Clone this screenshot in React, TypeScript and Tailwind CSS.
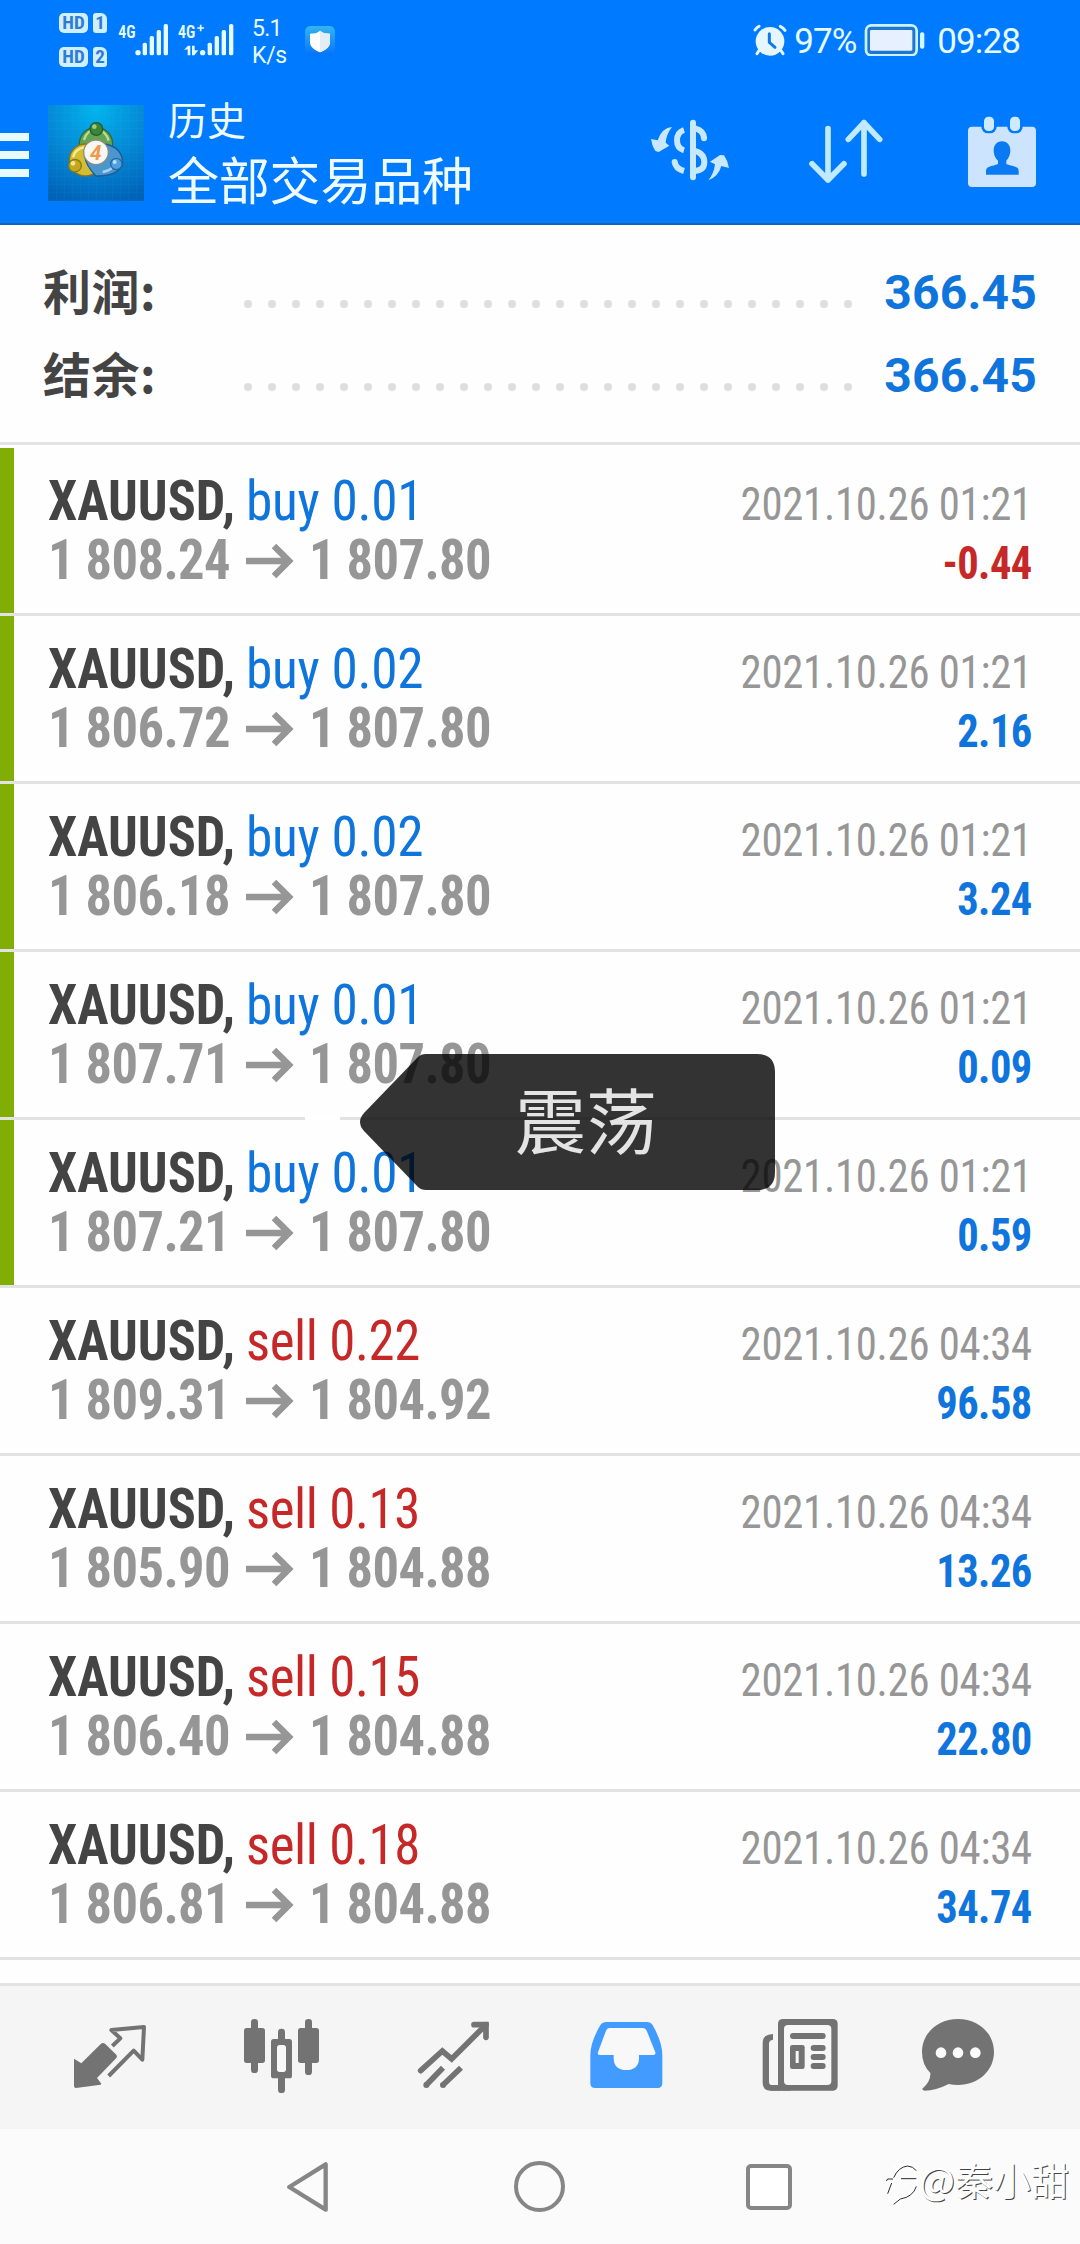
type Deal = {
  side: "buy" | "sell";
  volume: string;
  open: string;
  close: string;
  time: string;
  profit: string;
  marked?: boolean;
};

const deals: Deal[] = [
  { side: "buy", volume: "0.01", open: "1 808.24", close: "1 807.80", time: "2021.10.26 01:21", profit: "-0.44", marked: true },
  { side: "buy", volume: "0.02", open: "1 806.72", close: "1 807.80", time: "2021.10.26 01:21", profit: "2.16", marked: true },
  { side: "buy", volume: "0.02", open: "1 806.18", close: "1 807.80", time: "2021.10.26 01:21", profit: "3.24", marked: true },
  { side: "buy", volume: "0.01", open: "1 807.71", close: "1 807.80", time: "2021.10.26 01:21", profit: "0.09", marked: true },
  { side: "buy", volume: "0.01", open: "1 807.21", close: "1 807.80", time: "2021.10.26 01:21", profit: "0.59", marked: true },
  { side: "sell", volume: "0.22", open: "1 809.31", close: "1 804.92", time: "2021.10.26 04:34", profit: "96.58" },
  { side: "sell", volume: "0.13", open: "1 805.90", close: "1 804.88", time: "2021.10.26 04:34", profit: "13.26" },
  { side: "sell", volume: "0.15", open: "1 806.40", close: "1 804.88", time: "2021.10.26 04:34", profit: "22.80" },
  { side: "sell", volume: "0.18", open: "1 806.81", close: "1 804.88", time: "2021.10.26 04:34", profit: "34.74" },
];

const summary = [
  { label: "利润:", value: "366.45" },
  { label: "结余:", value: "366.45" },
];

function SimBadge({ slot }: { slot: string }) {
  return (
    <div className="flex h-5 gap-[5px] font-['Roboto_Condensed'] text-[19px] leading-5 font-bold text-[#2f7cd6]">
      <span className="w-[29px] rounded-[5px] bg-[#cff1ff] text-center">HD</span>
      <span className="w-3.5 rounded-[3px] rounded-tr-[6px] bg-[#cff1ff] text-center">{slot}</span>
    </div>
  );
}

function StatusBar() {
  return (
    <div className="flex h-20 items-start text-[#e6fbff]">
      <div className="mt-[13px] ml-[59px] flex flex-col gap-3.5">
        <SimBadge slot="1" />
        <SimBadge slot="2" />
      </div>
      <svg className="mt-5 ml-[11px] h-10 w-[52px]" viewBox="234 60 156 120" fill="currentColor">
        <text x="235" y="114" fontSize="54" fontWeight="600" textLength="52" lengthAdjust="spacingAndGlyphs" fontFamily="Roboto Condensed">4G</text>
        <circle cx="294" cy="158" r="8" />
        <rect x="308" y="128" width="13" height="38" rx="5" />
        <rect x="329" y="108" width="13" height="58" rx="5" />
        <rect x="350" y="90" width="13" height="76" rx="5" />
        <rect x="371" y="72" width="13" height="94" rx="5" />
      </svg>
      <svg className="mt-5 ml-2 h-10 w-[57px]" viewBox="414 60 171 120" fill="currentColor">
        <text x="414" y="114" fontSize="54" fontWeight="600" textLength="52" lengthAdjust="spacingAndGlyphs" fontFamily="Roboto Condensed">4G</text>
        <path d="M472 84h20M482 74v20" stroke="currentColor" strokeWidth="5" />
        <path d="M432 150l12-13h7v29h-8v-18zM456 137h8v14h11l-12 15h-7z" />
        <circle cx="488" cy="158" r="8" />
        <rect x="503" y="128" width="13" height="38" rx="5" />
        <rect x="524" y="108" width="13" height="58" rx="5" />
        <rect x="545" y="90" width="13" height="76" rx="5" />
        <rect x="567" y="72" width="13" height="94" rx="5" />
      </svg>
      <div className="mt-[15px] ml-[17px] w-[35px] font-['Roboto'] text-[23px] leading-[27px]">
        <p className="tracking-[-0.8px]">5.1</p>
        <p className="tracking-[-0.3px]">K/s</p>
      </div>
      <svg className="mt-[26px] ml-[18px] h-[30px] w-[30px]" viewBox="0 0 90 90">
        <defs>
          <linearGradient id="guard" x1="0" y1="0" x2="0" y2="1">
            <stop offset="0" stopColor="#35b4f0" />
            <stop offset="1" stopColor="#0573fb" />
          </linearGradient>
        </defs>
        <rect width="90" height="88" rx="16" fill="url(#guard)" />
        <path d="M45 14c8 7 18 9 30 9v26c0 14-14 24-30 30-16-6-30-16-30-30V23c12 0 22-2 30-9z" fill="#fff" />
        <path d="M45 14c8 7 18 9 30 9v26c0 14-14 24-30 30z" fill="#e3edf6" />
      </svg>
      <svg className="mt-6 ml-auto h-8 w-[34px]" viewBox="336 72 102 96" fill="none" stroke="#e6f6ff" strokeLinecap="round">
        <circle cx="387" cy="124" r="43" fill="#e6f6ff" stroke="none" />
        <path d="M342 90q6-9 12-11M418 79q9 4 14 12M354 152l-6 9M420 152l6 9" strokeWidth="9" />
        <path d="M385 101v26l17 15" stroke="#1178e6" strokeWidth="9" />
      </svg>
      <span className="mt-[22px] ml-[7px] w-[70px] font-['Roboto'] text-[35px] leading-10 tracking-[-0.9px]">97%</span>
      <svg className="mt-6 h-8 w-[62px]" viewBox="672 72 186 96">
        <rect x="678" y="76" width="152" height="90" rx="16" fill="#1d76d2" stroke="#c9f3ff" strokeWidth="8" />
        <rect x="690" y="90" width="127" height="62" rx="4" fill="#e6f0ff" />
        <rect x="840" y="97" width="13" height="49" rx="6" fill="#d5f5ff" />
      </svg>
      <span className="mt-[22px] mr-[60px] ml-[11px] font-['Roboto'] text-[35px] leading-10 tracking-[-0.9px]">09:28</span>
    </div>
  );
}

function AppLogo() {
  return (
    <svg className="mt-[25px] ml-[19px] h-24 w-24 shrink-0" viewBox="24 315 288 288">
      <defs>
        <radialGradient id="logoBg" cx="0.5" cy="0.05" r="1">
          <stop offset="0" stopColor="#00b4ee" />
          <stop offset="0.5" stopColor="#0589d6" />
          <stop offset="1" stopColor="#0062b8" />
        </radialGradient>
        <pattern id="logoGrid" width="24" height="24" patternUnits="userSpaceOnUse">
          <path d="M24 0H0v24" fill="none" stroke="#3cb5ea" strokeOpacity="0.2" strokeWidth="2" />
        </pattern>
      </defs>
      <rect x="24" y="315" width="288" height="288" fill="url(#logoBg)" />
      <rect x="24" y="315" width="288" height="288" fill="url(#logoGrid)" />
      <g strokeWidth="4">
        <circle cx="168" cy="432" r="50" fill="#63a452" stroke="#2f6b33" />
        <circle cx="136" cy="480" r="48" fill="#d3bd35" stroke="#85751c" />
        <path d="M168 528q-30-30-34-60l60-36q56 10 54 62-18 36-80 34z" fill="#4a97cf" stroke="#1d5b94" />
        <path d="M132 420q8-30 36-32 30 4 38 34" fill="none" stroke="#b9dc9a" strokeWidth="7" />
        <path d="M99 472q6-26 34-30" fill="none" stroke="#f6ee8e" strokeWidth="7" />
        <path d="M188 516q38-6 44-42" fill="none" stroke="#a3d5f3" strokeWidth="7" />
        <circle cx="169" cy="387" r="19" fill="#3c8438" stroke="#275c28" />
        <circle cx="105" cy="497" r="19" fill="#c3a81e" stroke="#8c7717" />
        <circle cx="229" cy="492" r="17" fill="#4fa0dc" stroke="#2568a4" />
        <circle cx="163" cy="380" r="7" fill="#9bcb86" stroke="none" />
        <circle cx="99" cy="490" r="7" fill="#f6ea90" stroke="none" />
        <circle cx="224" cy="486" r="6" fill="#b7e0fa" stroke="none" />
        <circle cx="168" cy="457" r="37" fill="#f7f7f4" stroke="#8f8d7c" />
      </g>
      <text x="167" y="479" textAnchor="middle" fontSize="62" fontWeight="700" fontStyle="italic" fontFamily="Roboto" fill="#f09a4e">4</text>
    </svg>
  );
}

function Header() {
  return (
    <header className="h-[225px] border-b-2 border-[#1464b8] bg-[#007aff]">
      <StatusBar />
      <div className="flex items-start">
        <div className="mt-[53px] flex w-[29px] flex-col gap-2.5">
          <span className="h-2 bg-[#e8fbff]" />
          <span className="h-2 bg-[#e8fbff]" />
          <span className="h-2 bg-[#e8fbff]" />
        </div>
        <AppLogo />
        <div className="mt-[19px] ml-6 font-['Noto_Sans_CJK_SC',sans-serif] text-[#effcff]">
          <p className="text-[39px] leading-[39px]">历史</p>
          <h1 className="mt-[15px] text-[51px] leading-[51px] tracking-[-0.2px]">全部交易品种</h1>
        </div>
        <svg className="mt-[37px] ml-auto h-[68px] w-20" viewBox="30 354 240 204" fill="none" stroke="#c8e8ff" strokeWidth="18">
          <path d="M159 371v164" strokeLinecap="round" />
          <path d="M132 393q-21 7-21 31t21 30M165 388q26 6 27 30" />
          <circle cx="192" cy="418" r="9" fill="#c8e8ff" stroke="none" />
          <circle cx="104" cy="489" r="9" fill="#c8e8ff" stroke="none" />
          <path d="M104 489q3 20 28 27M162 455q31 8 31 34t-31 27" />
          <g fill="#c8e8ff" stroke="none">
            <path d="M96 384q-30 2-43 40l-20-4q3 21 13 36l10 3 32-19-11-9q2-25 19-47z" />
            <path d="M205 544q30-11 39-43l23 6q-3-21-15-38l-12-1-30 20 15 8q-3 27-20 48z" />
          </g>
        </svg>
        <svg className="mt-[37px] ml-[76px] h-[68px] w-[80px]" viewBox="498 354 240 204" fill="none" stroke="#bfeaff" strokeWidth="17" strokeLinecap="round" strokeLinejoin="round">
          <path d="M564 389v154M516 494l48 49 48-49" />
          <path d="M672 525V371M625 421l47-50 47 50" />
        </svg>
        <svg className="mt-[34px] mr-[42px] ml-20 h-[76px] w-[72px]" viewBox="978 342 216 228">
          <rect x="984" y="380" width="204" height="181" rx="12" fill="#cde4ff" />
          <rect x="1024" y="342" width="46" height="58" rx="20" fill="#007aff" />
          <rect x="1102" y="342" width="46" height="58" rx="20" fill="#007aff" />
          <rect x="1032" y="350" width="30" height="43" rx="13" fill="#cdeaff" />
          <rect x="1110" y="350" width="30" height="43" rx="13" fill="#cdeaff" />
          <path d="M1086 424c16 0 25 12 25 27 0 14-6 26-12 31v10c10 4 27 7 33 11 5 4 4 12 4 21h-98c0-9-1-17 4-21 6-4 22-7 32-11v-10c-7-5-13-17-13-31 0-15 9-27 25-27z" fill="#0a7af2" />
        </svg>
      </div>
    </header>
  );
}

function Summary() {
  return (
    <section className="h-[220px] border-b-3 border-[#e3e3e3] pt-[23px] pr-[43px] pl-[43px]">
      {summary.map(({ label, value }) => (
        <div key={label} className="flex h-[83px] items-center">
          <span className="w-[201px] font-['Noto_Sans_CJK_SC',sans-serif] text-[48px] leading-[83px] font-bold tracking-[0.5px] text-[#444]">{label}</span>
          <span className="flex gap-4 pt-[29px]">
            {Array.from({ length: 26 }, (_, i) => (
              <i key={i} className="h-2 w-2 rounded-full bg-[#dedede]" />
            ))}
          </span>
          <span className="ml-auto pt-1.5 font-['Roboto'] text-[48px] leading-none font-bold tracking-[0.2px] text-[#0f75dc]">{value}</span>
        </div>
      ))}
    </section>
  );
}

function DealRow({ deal, gap }: { deal: Deal; gap: boolean }) {
  return (
    <li className="relative flex h-[168px] border-b-3 border-[#e3e3e3] font-['Roboto_Condensed'] whitespace-nowrap">
      <span className={deal.marked ? "w-3.5 bg-[#80ae04]" : "w-3.5"} />
      <div className="pt-6 pl-[34px] text-[55px] leading-[59px]">
        <p className="flex">
          <span className="w-[198px] origin-left scale-x-[0.95] font-bold text-[#444]">XAUUSD,</span>
          <span className={deal.side === "buy" ? "origin-left scale-x-[0.97] tracking-[-0.3px] text-[#0f75dc]" : "origin-left scale-x-[0.96] tracking-[-0.4px] text-[#c62828]"}>
            {deal.side} {deal.volume}
          </span>
        </p>
        <p className="flex items-center font-bold tracking-[-0.6px] text-[#969696]">
          <span className="w-[198px] origin-left scale-x-[0.955]">{deal.open}</span>
          <svg className="mr-[15px] h-9 w-12" viewBox="0 0 48 36" fill="none" stroke="currentColor" strokeWidth="6.5">
            <path d="M0 18h43M28 3l15 15-15 15" />
          </svg>
          <span className="origin-left scale-x-[0.955]">{deal.close}</span>
        </p>
      </div>
      <div className="mr-12 ml-auto pt-[27px] text-right text-[45.5px] leading-[59px]">
        <p className="origin-right scale-x-[0.94] tracking-[-0.3px] text-[#969696]">{deal.time}</p>
        <p className={deal.profit.startsWith("-") ? "origin-right scale-x-[0.935] font-bold tracking-[-0.6px] text-[#c62828]" : "origin-right scale-x-[0.935] font-bold tracking-[-0.6px] text-[#0f75dc]"}>
          {deal.profit}
        </p>
      </div>
      {gap && <span className="absolute -bottom-[3px] left-[305px] h-[3px] w-[35px] bg-white" />}
    </li>
  );
}

function Bubble() {
  return (
    <div className="absolute top-[1054px] left-[360px] h-[136px] w-[415px]">
      <svg className="absolute inset-0 h-full w-full" viewBox="0 0 415 136" fill="#000" fillOpacity="0.8">
        <path d="M66 0h331q18 0 18 18v100q0 18-18 18H66q-5 0-8-3L4 77q-8-9 0-18L58 3q3-3 8-3z" />
      </svg>
      <span className="relative block pt-[23px] pl-[155px] font-['Noto_Sans_CJK_SC',sans-serif] text-[71px] leading-[80px] text-[#e4e4e4]">震荡</span>
    </div>
  );
}

function TabBar() {
  return (
    <nav className="flex h-[146px] items-start border-t-3 border-[#e3e3e3] bg-[#f5f5f5] pt-8 text-[#737373]">
      <svg className="ml-[74px] h-[76px] w-[73px]" viewBox="72 54 219 228">
        <path d="M72 176l22 14 59-59q6-4 12 0l34 33q4 5 0 10l-58 60 13 17-2 3-74 10q-6 0-6-6z" fill="currentColor" />
        <path d="M187 138l24-23-27-25 98-9-5 98-26-27-75 76" fill="none" stroke="currentColor" strokeWidth="12" strokeLinejoin="round" />
      </svg>
      <svg className="ml-24 h-[76px] w-[77px]" viewBox="579 54 231 228" fill="currentColor">
        <rect x="603" y="57" width="21" height="162" rx="10" />
        <rect x="582" y="84" width="63" height="105" rx="8" />
        <rect x="765" y="57" width="21" height="168" rx="10" />
        <rect x="744" y="84" width="63" height="105" rx="8" />
        <rect x="684" y="86" width="21" height="193" rx="10" />
        <rect x="663" y="117" width="63" height="118" rx="8" />
        <rect x="681" y="135" width="27" height="81" rx="8" fill="#f8f8f8" />
      </svg>
      <svg className="ml-[97px] h-[76px] w-[73px]" viewBox="1101 54 219 228" fill="none" stroke="currentColor" strokeWidth="17">
        <path d="M1112 212l65-59 28 24 103-103" strokeLinecap="round" />
        <path d="M1272 74h36v38" strokeLinecap="round" />
        <path d="M1128 256l51-53M1178 256l55-53" />
        <circle cx="1129" cy="255" r="9" fill="currentColor" stroke="none" />
        <circle cx="1179" cy="255" r="9" fill="currentColor" stroke="none" />
      </svg>
      <svg className="ml-[99px] h-[76px] w-[75px]" viewBox="57 54 225 228">
        <path d="M110 66h120q12 0 18 10 29 50 29 90v84q0 14-14 14H75q-14 0-14-14v-84q0-40 30-90 6-10 19-10z" fill="#429bff" />
        <path d="M118 84h101q8 0 11 8l26 65q2 8-6 8h-43v8q0 37-38 37t-38-37v-8H90q-9 0-6-8l24-65q3-8 10-8z" fill="#f8f8f8" />
      </svg>
      <svg className="ml-[98px] h-[76px] w-[77px]" viewBox="576 54 231 228" fill="currentColor">
        <path d="M609 102v17q-12 1-12 12v114q0 10 10 10h18l8 17h-31q-24 0-24-24V128q0-25 31-26z" />
        <rect x="624" y="57" width="179" height="215" rx="14" />
        <rect x="602" y="255" width="60" height="17" />
        <rect x="642" y="75" width="142" height="180" rx="12" fill="#f7f7f7" />
        <rect x="660" y="99" width="107" height="18" rx="9" />
        <rect x="660" y="135" width="44" height="72" rx="7" />
        <rect x="677" y="153" width="9" height="36" fill="#f7f7f7" />
        <rect x="722" y="135" width="45" height="18" rx="9" />
        <rect x="722" y="162" width="45" height="18" rx="9" />
        <rect x="722" y="189" width="45" height="18" rx="9" />
      </svg>
      <svg className="ml-[82px] h-[76px] w-[74px]" viewBox="1053 54 222 228" fill="currentColor">
        <path d="M1164 57c60 0 108 42 108 99s-48 99-108 99q-15 0-28-3-39 20-72 20-8-1-7-6 26-23 24-47-25-25-25-63c0-57 48-99 108-99z" />
        <g fill="#fbfbfb">
          <circle cx="1113" cy="158" r="16" />
          <circle cx="1164" cy="158" r="16" />
          <circle cx="1216" cy="158" r="16" />
        </g>
      </svg>
    </nav>
  );
}

function SystemNav() {
  return (
    <div className="flex h-[115px] items-center bg-[#fbfbfb]">
      <svg className="ml-[287px] h-[52px] w-11" viewBox="711 483 132 156" fill="none" stroke="#868686" strokeWidth="13" strokeLinejoin="round">
        <path d="M827 493v136L718 561z" />
      </svg>
      <span className="ml-[183px] h-[51px] w-[51px] rounded-full border-[4.5px] border-[#868686]" />
      <span className="ml-[181px] h-[46px] w-[46px] rounded-[5px] border-[4.5px] border-[#868686] bg-white" />
      <div className="ml-[91px] flex items-center pb-1">
        <svg className="h-12 w-9" viewBox="936 490 108 144" fill="none" stroke="#2a2a2a" strokeWidth="3">
          <path d="M972 512q30-18 62 6l2 26q-4 48-34 58l-32 18" stroke="#fff" strokeWidth="12" />
          <path d="M946 550l4-6h16M962 556l-12 32M968 540q14-32 42-35 16 1 26 14M990 543h46M1036 566q-10 32-48 38l-20 16" />
        </svg>
        <span className="pb-3 font-['Noto_Sans_CJK_SC',sans-serif] text-[38px] leading-[46px] whitespace-nowrap text-white [text-shadow:1px_1px_0_#444]">@秦小甜</span>
      </div>
    </div>
  );
}

export default function App() {
  return (
    <div className="relative flex h-[2244px] w-[1080px] flex-col overflow-hidden bg-[#fefefe]">
      <Header />
      <Summary />
      <ul className="grow pt-[3px]">
        {deals.map((deal, i) => (
          <DealRow key={i} deal={deal} gap={i === 3} />
        ))}
      </ul>
      <TabBar />
      <SystemNav />
      <Bubble />
    </div>
  );
}
